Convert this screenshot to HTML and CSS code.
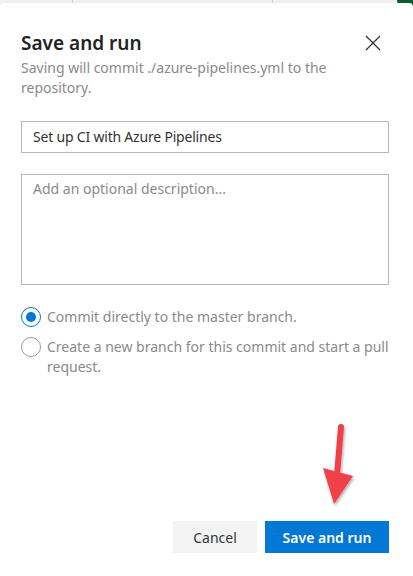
FILE: index.html
```html
<!DOCTYPE html>
<html>
<head>
<meta charset="utf-8">
<link rel="stylesheet" href="styles.css">
</head>
<body>
<div class="backdrop">
  <div class="topbar"><span class="seg s1"></span><span class="seg s2"></span><span class="seg s3"></span></div>
  <div class="corner"></div>
  <div class="dialog">
    <div class="header">
      <div class="titles">
        <h1 class="title">Save and run</h1>
        <p class="subtitle">Saving will commit ./azure-pipelines.yml to the repository.</p>
      </div>
      <button class="close" aria-label="Close">
        <svg width="16" height="16" viewBox="0 0 16 16"><path d="M1 1 L15 15 M15 1 L1 15" stroke="#333" stroke-width="1.3" fill="none"/></svg>
      </button>
    </div>
    <div class="field">Set up CI with Azure Pipelines</div>
    <div class="area">Add an optional description...</div>
    <div class="radios">
      <div class="radio">
        <span class="dot on"></span>
        <span class="label">Commit directly to the master branch.</span>
      </div>
      <div class="radio">
        <span class="dot"></span>
        <span class="label">Create a new branch for this commit and start a pull request.</span>
      </div>
    </div>
    <div class="footer">
      <button class="btn cancel">Cancel</button>
      <button class="btn primary">Save and run</button>
    </div>
    <svg class="arrow" width="60" height="100" viewBox="0 0 60 100">
      <defs>
        <filter id="sh" x="-50%" y="-50%" width="200%" height="200%">
          <feDropShadow dx="1" dy="2" stdDeviation="1.5" flood-color="#000" flood-opacity="0.35"/>
        </filter>
      </defs>
      <g filter="url(#sh)" fill="#f2404a">
        <path d="M25 7 L21 55" stroke="#f2404a" stroke-width="6" stroke-linecap="round"/>
        <path d="M7 48 L37 56 L18 84 Z"/>
      </g>
    </svg>
  </div>
</div>
</body>
</html>
```
FILE: styles.css
```css
* { box-sizing: border-box; }
html, body { margin: 0; padding: 0; }
body {
  width: 413px;
  height: 576px;
  overflow: hidden;
  font-family: "Segoe UI", "Noto Sans", "Open Sans", sans-serif;
  background: #f0f0f0;
}
.backdrop {
  position: relative;
  width: 413px;
  height: 576px;
  padding-top: 3px;
}
.topbar {
  position: absolute;
  top: 0; left: 0; right: 0;
  height: 3px;
  display: flex;
}
.seg { height: 3px; border-right: 1px solid #d0d0d0; }
.s1 { width: 73px; }
.s2 { width: 200px; }
.s3 { flex: 1; border-right: none; }
.corner {
  position: absolute;
  top: 0; right: 0;
  width: 16px;
  height: 10px;
  background: #0b5a35;
  border-bottom-left-radius: 16px 10px;
}
.dialog {
  position: relative;
  background: #fff;
  height: 573px;
  border-top-left-radius: 4px;
  border-top-right-radius: 4px;
  padding: 26px 24px 0 21px;
  display: flex;
  flex-direction: column;
}
.header {
  display: flex;
  justify-content: space-between;
  align-items: flex-start;
}
.titles { width: 330px; }
.title {
  margin: 0;
  font-size: 19px;
  font-weight: 600;
  color: #222;
  line-height: 28px;
}
.subtitle {
  margin: 1px 0 0;
  font-size: 14px;
  line-height: 20px;
  color: #8a8a8a;
}
.close {
  border: none;
  background: none;
  padding: 0;
  margin: 6px 8px 0 0;
  width: 16px;
  height: 16px;
  display: flex;
}
.field {
  margin-top: 23px;
  height: 32px;
  border: 1px solid #b7b7b7;
  font-size: 14px;
  color: #333;
  padding: 6px 11px;
  line-height: 18px;
  letter-spacing: -0.2px;
}
.area {
  margin-top: 21px;
  height: 111px;
  border: 1px solid #b7b7b7;
  font-size: 14px;
  color: #8a8a8a;
  padding: 4px 11px;
  line-height: 20px;
}
.radios {
  margin-top: 22px;
  display: flex;
  flex-direction: column;
  gap: 10px;
}
.radio {
  display: flex;
  align-items: flex-start;
  gap: 6px;
}
.dot {
  flex: none;
  width: 20px;
  height: 20px;
  border-radius: 50%;
  border: 1px solid #9a9a9a;
  position: relative;
}
.dot.on { border-color: #0078d4; }
.dot.on::after {
  content: "";
  position: absolute;
  left: 4px; top: 4px;
  width: 10px; height: 10px;
  border-radius: 50%;
  background: #0078d4;
}
.label {
  font-size: 14px;
  line-height: 20px;
  color: #8a8a8a;
  width: 345px;
}
.footer {
  margin-top: auto;
  margin-bottom: 23px;
  display: flex;
  justify-content: flex-end;
  gap: 8px;
}
.btn {
  height: 32px;
  border: none;
  font-family: inherit;
  font-size: 14px;
  padding: 0;
}
.cancel { width: 84px; background: #f3f3f3; color: #333; }
.primary { width: 124px; background: #0078d4; color: #fff; font-weight: 600; }
.arrow {
  position: absolute;
  left: 316px;
  top: 417px;
}
```
